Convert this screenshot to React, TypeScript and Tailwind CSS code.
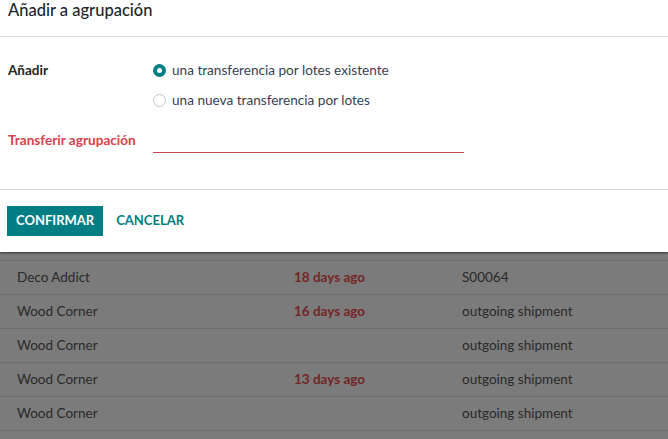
const rows = [
  { partner: 'Deco Addict', date: '18 days ago', source: 'S00064' },
  { partner: 'Wood Corner', date: '16 days ago', source: 'outgoing shipment' },
  { partner: 'Wood Corner', date: '', source: 'outgoing shipment' },
  { partner: 'Wood Corner', date: '13 days ago', source: 'outgoing shipment' },
  { partner: 'Wood Corner', date: '', source: 'outgoing shipment' },
];

function Radio({ checked, label }: { checked?: boolean; label: string }) {
  return (
    <label className="flex items-center gap-[6px] h-[20px]">
      {checked ? (
        <span className="w-[13px] h-[13px] rounded-full bg-[#017e84] flex items-center justify-center">
          <span className="w-[5px] h-[5px] rounded-full bg-white" />
        </span>
      ) : (
        <span className="w-[13px] h-[13px] rounded-full border border-[#c4c7cb] bg-white" />
      )}
      <span className="text-[13.6px] text-[#374151]">{label}</span>
    </label>
  );
}

export default function App() {
  return (
    <div className="w-[668px] h-[439px] overflow-hidden bg-[#7b7b7b] flex flex-col font-['Lato',sans-serif]">
      {/* Dialog */}
      <div className="h-[252px] shrink-0 bg-white flex flex-col shadow-[0_1px_2px_rgba(0,0,0,0.6)] relative z-10">
        <div className="h-[37px] border-b border-[#d8dadd] px-2 flex items-start">
          <h4 className="text-[16.5px] leading-[20px] font-medium text-[#212529]">Añadir a agrupación</h4>
        </div>

        <div className="px-2 pt-[23px] h-[153px] border-b border-[#d8dadd]">
          <div className="flex">
            <div className="w-[145px] text-[13.5px] font-bold text-[#212529]">Añadir</div>
            <div className="flex flex-col gap-[10px]">
              <Radio checked label="una transferencia por lotes existente" />
              <Radio label="una nueva transferencia por lotes" />
            </div>
          </div>
          <div className="flex mt-[20px]">
            <div className="w-[145px] text-[13.6px] font-bold text-[#d6424e]">Transferir agrupación</div>
            <div className="w-[311px] h-[23px] border-b border-[#c4474f]" />
          </div>
        </div>

        <div className="px-[7px] pt-[16px] flex items-center gap-[5px]">
          <button className="h-[30px] px-[9px] bg-[#017e84] text-white text-[13px] font-bold">
            CONFIRMAR
          </button>
          <button className="h-[30px] px-[8px] text-[#017e84] text-[13px] font-bold">
            CANCELAR
          </button>
        </div>
      </div>

      {/* List behind overlay */}
      <div className="pt-[8px]">
        <div className="border-t border-[#6e6e6e]">
          {rows.map((row, i) => (
            <div key={i} className="h-[34px] border-b border-[#6e6e6e] flex items-center text-[13.5px] text-[#2a2a2a]">
              <div className="w-[294px] pl-[17px]">{row.partner}</div>
              <div className="w-[168px] text-[#742626] font-bold">{row.date}</div>
              <div>{row.source}</div>
            </div>
          ))}
        </div>
      </div>
    </div>
  );
}
